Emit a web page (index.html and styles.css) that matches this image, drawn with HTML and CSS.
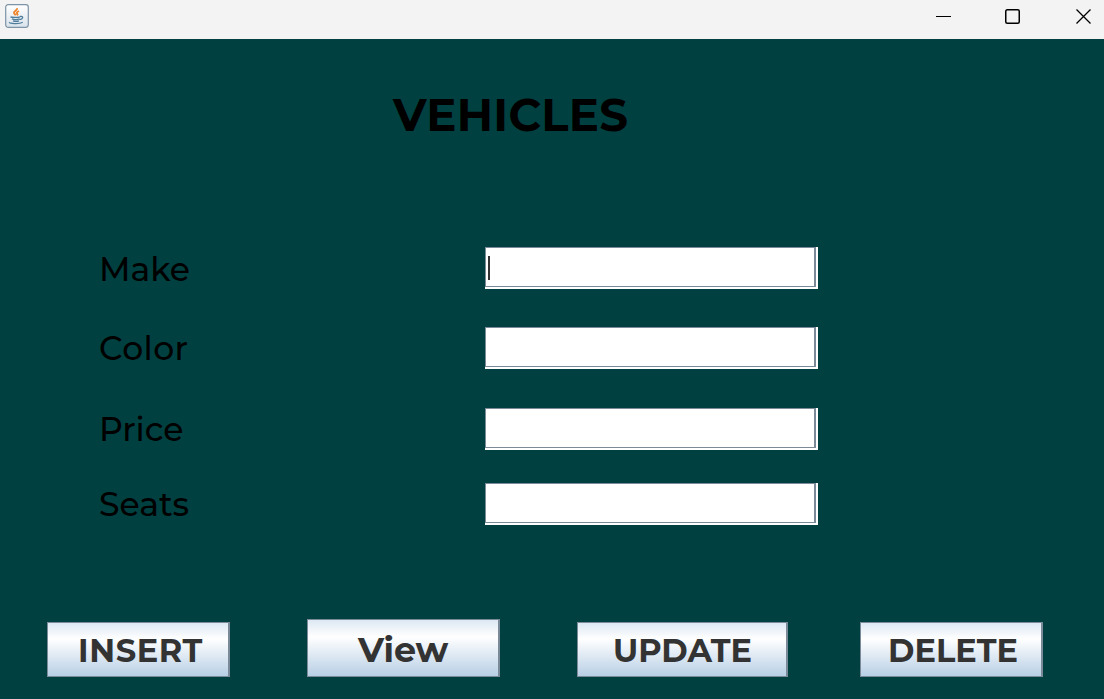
FILE: index.html
```html
<!DOCTYPE html>
<html lang="en">
<head>
<meta charset="utf-8">
<title>Vehicles</title>
<link rel="stylesheet" href="styles.css">
</head>
<body>
<header class="titlebar">
  <svg class="app-icon" width="24" height="24" viewBox="0 0 24 24">
    <defs><linearGradient id="tile" x1="0" y1="0" x2="0" y2="1"><stop offset="0" stop-color="#fff"/><stop offset="1" stop-color="#d9e3eb"/></linearGradient></defs>
    <rect x=".7" y=".7" width="22.6" height="22.6" rx="2.5" fill="url(#tile)" stroke="#7d93a6" stroke-width="1.2"/>
    <path d="M12 4.200c1 2-3.500 2.800-3 4.600.2 1 1.300 1.500 1.700 2.600M14 7c-2.200 1-2.600 1.800-1.700 2.800.5.6.3 1.100-.2 1.600" fill="none" stroke="#ef8428" stroke-width="1.900"/>
    <path d="M5.500 12.900c1.500.8 7.500.7 9.500-.1M7 14.900c1.800.7 5.800.6 7.600 0M8 16.800c1.400.5 4.600.5 6 0M15 12.500c4-.8 3.200 2.700-.4 3.200M4.500 18.100c-1 1.700 10 2.200 13.200.2" fill="none" stroke="#4f7d9c" stroke-width="1.300"/>
  </svg>
  <div class="controls">
    <svg width="16" height="16" viewBox="0 0 16 16"><path d="M0 8.500h15" stroke="#000"/></svg>
    <svg width="16" height="16" viewBox="0 0 16 16"><rect x=".75" y="1.750" width="13.500" height="13.500" rx="1.500" fill="none" stroke="#000" stroke-width="1.500"/></svg>
    <svg width="16" height="16" viewBox="0 0 16 16"><path d="M.5 1.500l14 14M14.500 1.500l-14 14" stroke="#000" stroke-width="1.300"/></svg>
  </div>
</header>
<main class="panel">
  <h1 class="title">VEHICLES</h1>
  <form class="form">
    <label class="row"><span class="label make">Make</span><span class="field"><span class="well"><i class="caret"></i></span></span></label>
    <label class="row"><span class="label color">Color</span><span class="field"><span class="well"></span></span></label>
    <label class="row"><span class="label price">Price</span><span class="field"><span class="well"></span></span></label>
    <label class="row"><span class="label seats">Seats</span><span class="field"><span class="well"></span></span></label>
  </form>
  <div class="actions">
    <button class="button insert">INSERT</button>
    <button class="button view">View</button>
    <button class="button update">UPDATE</button>
    <button class="button delete">DELETE</button>
  </div>
</main>
</body>
</html>
```
FILE: styles.css
```css
* { box-sizing: border-box; }
body {
  margin: 0;
  width: 1104px;
  height: 699px;
  display: flex;
  flex-direction: column;
  overflow: hidden;
  background: #004040;
  font-family: Montserrat, Inter, sans-serif;
}
.titlebar {
  height: 39px;
  display: flex;
  justify-content: space-between;
  padding: 4px 5px 0;
  background: #f3f3f3;
}
.app-icon { display: block; }
.controls { display: flex; gap: 53px; padding: 4px 7px 0 0; }
.controls svg { display: block; }
.controls svg:last-child { margin-left: 2px; }
.panel { flex: 1; display: flex; flex-direction: column; }
.title {
  margin: 49px 0 0 393px;
  height: 54px;
  font-size: 45px;
  line-height: 54px;
  font-weight: 700;
  letter-spacing: 0.3px;
  color: #000;
}
.form {
  display: grid;
  grid-template-rows: 80px 81px 75px 42px;
  margin: 105px 0 0 99px;
}
.row { display: grid; grid-template-columns: 386px 333px; height: 42px; }
.label {
  font-size: 33px;
  line-height: 42px;
  font-weight: 500;
  color: #000;
}
.make { line-height: 45px; }
.color { letter-spacing: 0.4px; }
.field {
  height: 42px;
  padding: 0 2px 2px 0;
  background: #fff;
}
.well {
  display: block;
  height: 40px;
  padding: 8px 0 0 2px;
  border: solid #7a8a99;
  border-width: 1px 2px 1px 1px;
}
.caret { display: block; width: 2px; height: 24px; background: #333; }
.actions {
  display: flex;
  align-items: flex-end;
  height: 58px;
  margin: 94px 0 0 47px;
}
.button {
  height: 55px;
  margin: 0;
  padding: 2px 0 0 2px;
  border: solid #7a8a99;
  border-width: 1px 2px 1px 1px;
  background: linear-gradient(#dde8f3 0%, #fff 30%, #b8cfe5 100%);
  color: #333;
  font: 700 32px/51px Montserrat, Inter, sans-serif;
  white-space: nowrap;
}
.insert { width: 183px; margin-right: 77px; padding-left: 5px; letter-spacing: 0.6px; }
.view { width: 193px; height: 58px; margin-right: 77px; padding-left: 0; font-size: 35px; letter-spacing: -0.2px; }
.update { width: 211px; margin-right: 72px; padding-left: 1px; }
.delete { width: 183px; padding-left: 4px; }
```
